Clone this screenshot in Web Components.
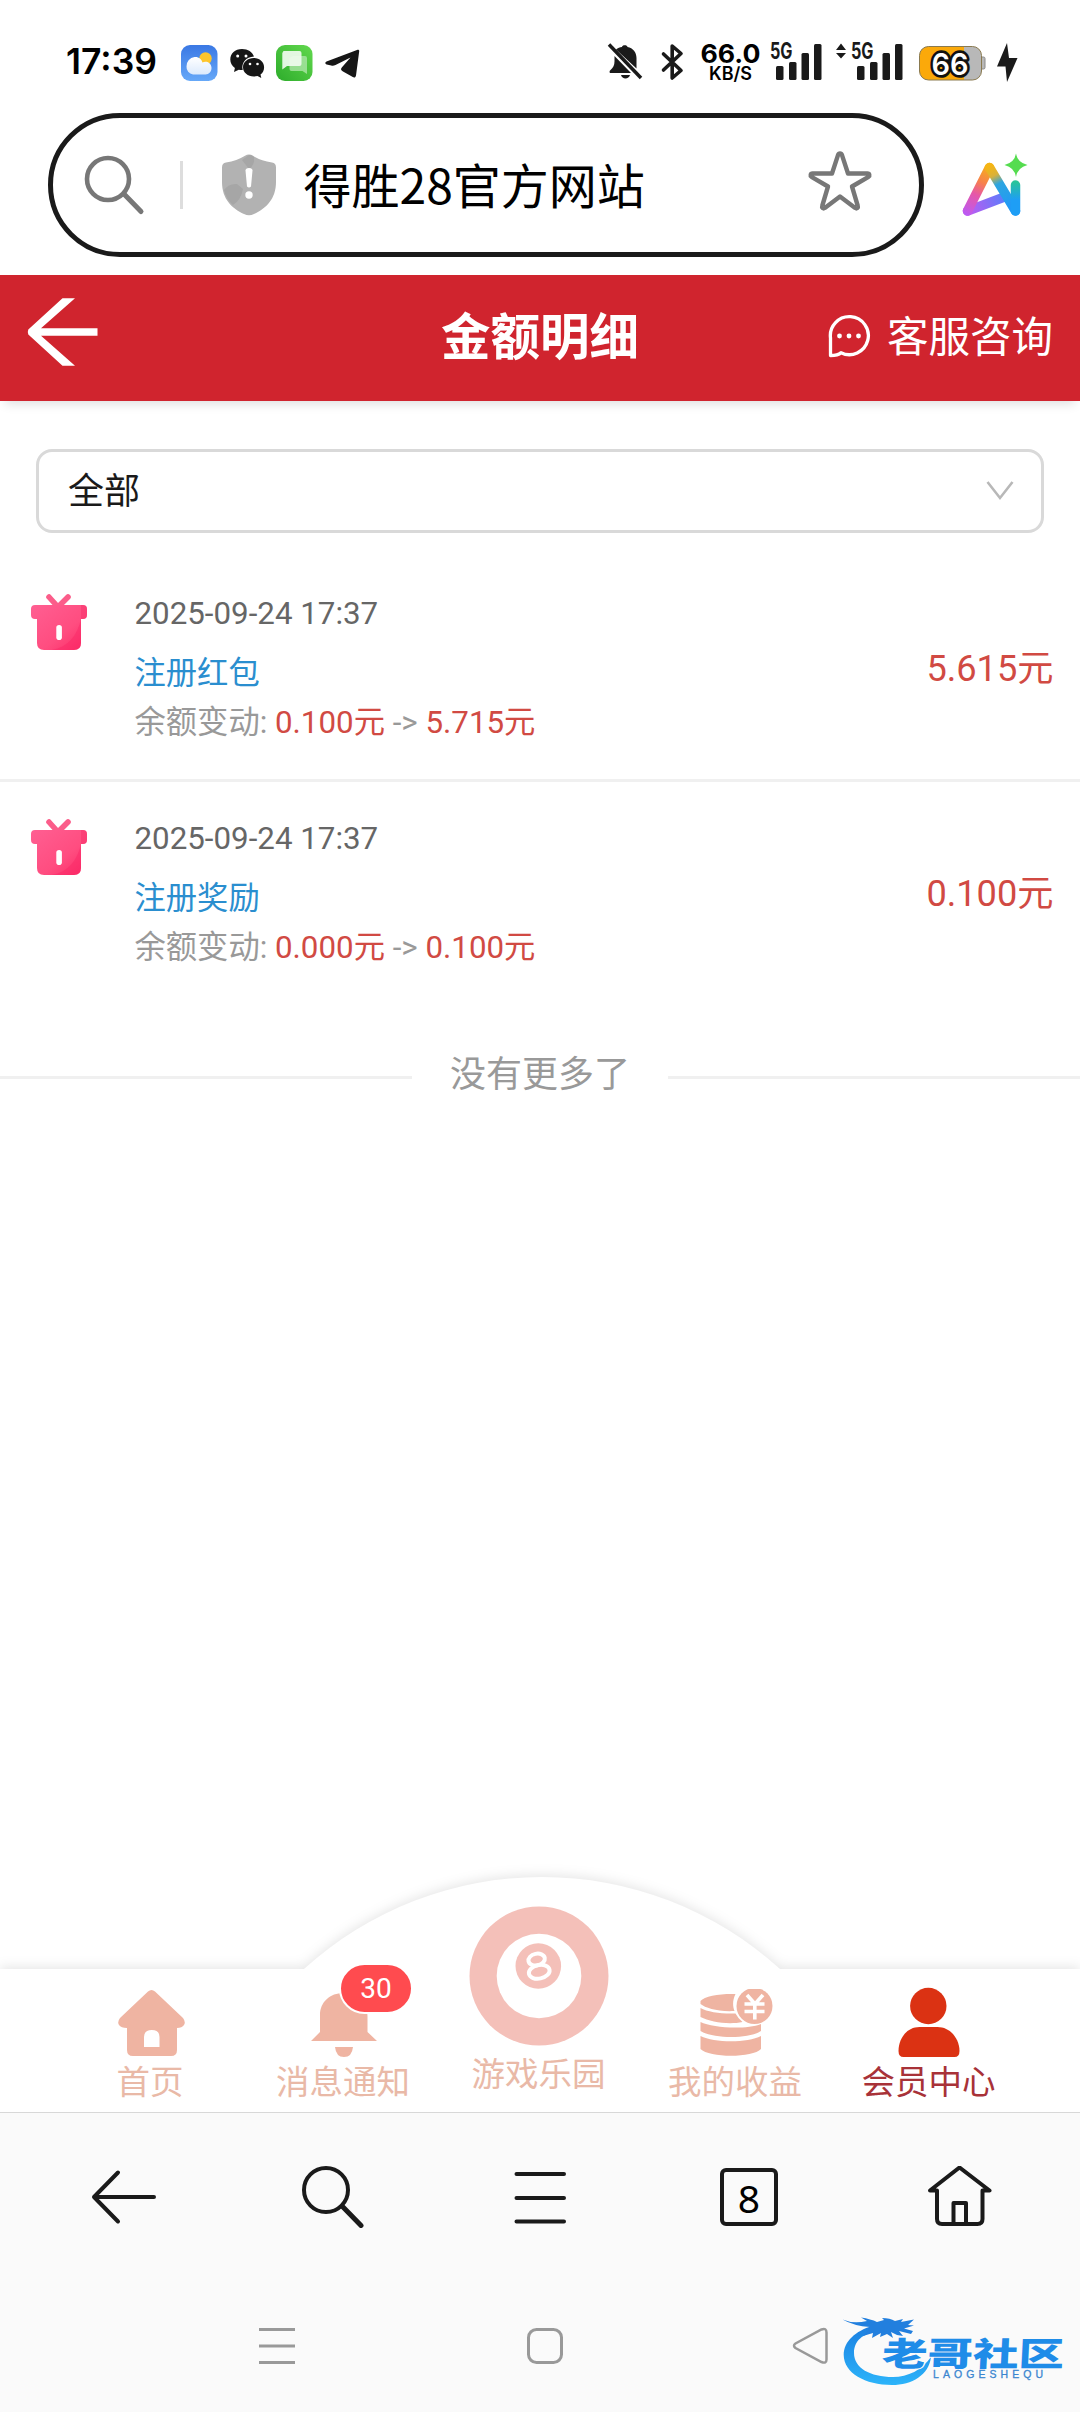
<!DOCTYPE html>
<html lang="zh-CN">
<head>
<meta charset="utf-8">
<title>金额明细</title>
<style>
html,body{margin:0;padding:0;background:#fff}
body{width:1080px;height:2412px;overflow:hidden;font-family:Roboto,"Noto Sans CJK SC",sans-serif}
</style>
</head>
<body>
<phone-screen>
  <status-bar></status-bar>
  <address-bar>得胜28官方网站</address-bar>
  <page-header>金额明细<span slot="service">客服咨询</span></page-header>
  <filter-select>全部</filter-select>
  <record-list>
    <record-item time="2025-09-24 17:37" from="0.100元" to="5.715元" amount="5.615元" divided>注册红包</record-item>
    <record-item time="2025-09-24 17:37" from="0.000元" to="0.100元" amount="0.100元">注册奖励</record-item>
  </record-list>
  <list-end>没有更多了</list-end>
  <tab-bar slot="bottom">
    <tab-item icon="house" style="width:193px">首页</tab-item>
    <tab-item icon="bell" badge="30" style="width:193px">消息通知</tab-item>
    <tab-item icon="ball" big style="width:198px">游戏乐园</tab-item>
    <tab-item icon="coins" style="width:195px">我的收益</tab-item>
    <tab-item icon="person" active style="width:192px">会员中心</tab-item>
  </tab-bar>
  <browser-bar slot="bottom">8</browser-bar>
  <system-nav slot="bottom"></system-nav>
</phone-screen>
<script>
const define = (name, html) => customElements.define(name, class extends HTMLElement {
  connectedCallback() {
    if (this.shadowRoot) return;
    const t = document.createElement('template');
    t.innerHTML = typeof html === 'function' ? html(this) : html;
    this.attachShadow({mode: 'open'}).append(t.content.cloneNode(true));
  }
});

define('phone-screen', `
<style>
:host{display:flex;flex-direction:column;width:1080px;height:2412px;background:#fff}
main{flex:1;min-height:0}
</style>
<main><slot></slot></main><slot name="bottom"></slot>`);

define('status-bar', `
<style>
:host{display:flex;height:96px;box-sizing:border-box;padding:43px 60px 0 66px;justify-content:space-between;align-items:flex-start;color:#000}
.g{display:flex}
svg{display:block;overflow:visible}
text{font-family:Inter,sans-serif}
.t{margin-right:24px}
.w{margin-right:12px}.c{margin-right:12px}.m{margin-right:12px}
</style>
<div class="g">
 <svg class="t" width="91" height="38"><text x="0" y="31" font-size="36" font-weight="600" textLength="91" lengthAdjust="spacingAndGlyphs">17:39</text></svg>
 <svg class="w" width="37" height="38" viewBox="0 0 37 38">
  <defs><linearGradient id="b" x2="0" y2="1"><stop stop-color="#3a78e4"/><stop offset="1" stop-color="#66a8f8"/></linearGradient><linearGradient id="cl" x2="0" y2="1"><stop stop-color="#fff"/><stop offset="1" stop-color="#dceafc"/></linearGradient></defs>
  <rect y="2" width="36.500" height="36" rx="9" fill="url(#b)"/><circle cx="24.500" cy="15.500" r="6.200" fill="#fdc52c"/>
  <path d="M12 31.500a7.500 7.500 0 0 1-6.500-8 9 9 0 0 1 8-9.500c4-.5 7 2 8 5.500 3-2 8.500-.5 9 5 .2 4-2.500 7-6 7z" fill="url(#cl)"/>
 </svg>
 <svg class="c" width="34" height="38" viewBox="0 0 34 38">
  <path d="M12 6C5 6 .3 10.500.3 16.500c0 3.600 1.700 6.500 4.600 8.500L4 29l4.800-2.300c1.200.3 2.600.4 3.900.3C11 20 16 14 24 13.600 22.500 9 18 6 12 6z" fill="#161616"/>
  <path d="M23.800 15c-6 0-10.800 4-10.800 9.200s4.800 9.200 10.800 9.200c1.300 0 2.500-.2 3.700-.5L31.300 35l-.8-3.400c2.300-1.700 3.600-4.400 3.600-7.400C34.100 19 29.500 15 23.800 15z" fill="#161616"/>
  <g fill="#fff"><circle cx="7.700" cy="13" r="1.500"/><circle cx="16" cy="13" r="1.500"/><circle cx="20" cy="21" r="1.300"/><circle cx="27.500" cy="21" r="1.300"/></g>
 </svg>
 <svg class="m" width="37" height="38" viewBox="0 0 37 38">
  <defs><linearGradient id="gg" x1="1" x2="0" y2="1"><stop stop-color="#62d84e"/><stop offset="1" stop-color="#2dac2b"/></linearGradient></defs>
  <rect y="2" width="36.500" height="36" rx="9" fill="url(#gg)"/>
  <path d="M17 13h12a2 2 0 0 1 2 2v16l-4.500-3H15.500a2 2 0 0 1-2-2V15z" fill="#a6e3a0" opacity=".85"/>
  <path d="M7.500 8h16a2 2 0 0 1 2 2v11a2 2 0 0 1-2 2H11l-4.700 3.500V10z" fill="#effbee" opacity=".93"/>
 </svg>
 <svg width="35" height="38" viewBox="0 0 35 38"><path d="M1.500 18.500 32 7c1.500-.5 2.300.1 2.200 1.200L31 32.500c-.3 1.800-1.600 2.600-3.200 1.600L18 28.500c-2.200-1.300-2.600-2.400-1-4.300L25.500 14.500 10.500 22c-1.600.8-2.700 1-4.300.6L1.700 21.500c-1.700-.5-1.900-2.400-.2-3z" fill="#161616"/></svg>
</div>
<svg width="413" height="42" viewBox="607 43 413 42" fill="#1a1a1a">
 <path d="M609 44.500 641 78" stroke="#1a1a1a" stroke-width="3.500"/>
 <path d="M616 49.500c2-1.600 3.700-2.300 6-2.500 0-2.500 5.500-2.500 5.500 0 5.500 1 9 5.500 9 11v10.500zM614.500 56 631 73H610c-.8-.8-.4-2 .3-2.700 3-2.800 4.200-5 4.200-9zM621 75h9c-1 4.600-8 4.600-9 0z"/>
 <path d="M663.500 54 681 70.500 672.200 78V46L681 53.500 663.500 70" fill="none" stroke="#1a1a1a" stroke-width="3.600" stroke-linejoin="round" stroke-linecap="round"/>
 <g fill="#000"><text x="700.500" y="63" font-size="26" font-weight="700" textLength="60" lengthAdjust="spacingAndGlyphs">66.0</text>
 <text x="709" y="79.800" font-size="18" font-weight="600" textLength="43" lengthAdjust="spacingAndGlyphs">KB/S</text></g>
 <text x="770" y="59.300" font-size="22.500" font-weight="700" textLength="22.500" lengthAdjust="spacingAndGlyphs">5G</text>
 <rect x="776" y="66" width="7.500" height="14" rx="1.500"/><rect x="789" y="62" width="7.500" height="18" rx="1.500"/><rect x="801.500" y="53" width="7.500" height="27" rx="1.500"/><rect x="814" y="44" width="7.500" height="36" rx="1.500"/>
 <path d="M836 50h10l-5-6.500zM836 53h10l-5 5.500z"/>
 <text x="851" y="59.300" font-size="22.500" font-weight="700" textLength="22.500" lengthAdjust="spacingAndGlyphs">5G</text>
 <rect x="857" y="66" width="7.500" height="14" rx="1.500"/><rect x="870" y="62" width="7.500" height="18" rx="1.500"/><rect x="882.500" y="53" width="7.500" height="27" rx="1.500"/><rect x="895" y="44" width="7.500" height="36" rx="1.500"/>
 <path d="M980 57h3.500a1.500 1.500 0 0 1 1.500 1.500v9a1.500 1.500 0 0 1-1.500 1.500H980z" fill="#b8b8b8" stroke="#8a8a8a"/>
 <rect x="919.500" y="46.500" width="62" height="33.500" rx="9" fill="#b8b8b8"/><path d="M964 46.500H928.500a9 9 0 0 0-9 9V71a9 9 0 0 0 9 9H964z" fill="#fba90a"/>
 <rect x="919.500" y="46.500" width="62" height="33.500" rx="9" fill="none" stroke="#8a7a50"/>
 <text x="931.500" y="74.500" font-size="30" font-weight="600" fill="#fff" stroke="#111" stroke-width="5.500" stroke-linejoin="round" paint-order="stroke" textLength="37" lengthAdjust="spacingAndGlyphs">66</text>
 <path d="M1007 43 997 66.500h8.500L1007 82l10.500-24H1009z"/>
</svg>`);

define('address-bar', `
<style>
:host{display:flex;height:179px;box-sizing:border-box;padding:17px 52px 0 48px;gap:38px;align-items:flex-start}
.pill{box-sizing:border-box;width:876px;height:144px;border:5px solid #1a1a1a;border-radius:72px;display:flex;align-items:center;padding:0 47px 0 31px}
.txt{flex:1;font:48px/70px "Noto Sans CJK SC",sans-serif;color:#000;margin:-4px 0 0 27px}
i{width:2.500px;height:48px;background:#ddd;margin:0 38px 0 36px}
svg{display:block;overflow:visible}
</style>
<div class="pill">
 <svg width="60" height="60" viewBox="84 155 60 60" fill="none" stroke="#777" stroke-width="4.600" stroke-linecap="round"><circle cx="108" cy="179" r="21"/><path d="m124 194 17 17.500" stroke-width="5"/></svg>
 <i></i>
 <svg width="56" height="62" viewBox="221 154 56 62"><path d="M249 154.500q2 0 4 1.300 8 5 19 6.700 4 .7 4 5V182c0 17-10 26.500-22 32q-5 2.500-10 0c-12-5.500-22-15-22-32v-14.500q0-4.300 4-5 11-1.700 19-6.700 2-1.300 4-1.300z" fill="#b2b2b2"/><path d="M249 155q3 0 5 2 1 8-5 12l-7-9zM224 190q5-7 13-6l6 5q-2 11-10 16-7-6-9-15z" fill="#a6a6a6"/><path d="M245.500 170.500q0-2.500 3.500-2.500t3.500 2.500l-1.500 16q-2 2-4 0z" fill="#fff"/><circle cx="249" cy="195" r="3.700" fill="#fff"/></svg>
 <span class="txt"><slot></slot></span>
 <svg width="62" height="60" viewBox="809 152 62 60" transform="translate(-1 -4)"><path d="M840 154.500c1 0 1.600.5 2 1.600l6 18.400h19.500c2 0 2.500 2.200 1 3.300L852 187.500l5.800 19.500c.6 1.800-1 3-2.600 2L840 197.500 824.800 209c-1.600 1-3.200-.2-2.600-2l5.800-19.500L811.500 177.800c-1.500-1.100-1-3.300 1-3.300H832l6-18.400c.4-1.100 1-1.600 2-1.600z" fill="none" stroke="#777" stroke-width="4.400" stroke-linejoin="round"/></svg>
</div>
<svg style="margin-top:40px" width="66" height="64" viewBox="962 153 66 64">
 <defs><linearGradient id="a1" gradientUnits="userSpaceOnUse" x1="990" y1="165" x2="966" y2="214"><stop stop-color="#f5b514"/><stop offset=".35" stop-color="#f7814c"/><stop offset=".6" stop-color="#e657a8"/><stop offset="1" stop-color="#bc5af2"/></linearGradient>
 <linearGradient id="a2" gradientUnits="userSpaceOnUse" x1="966" y1="212" x2="1004" y2="196"><stop stop-color="#c25af0"/><stop offset="1" stop-color="#5c7cfb"/></linearGradient>
 <linearGradient id="a3" gradientUnits="userSpaceOnUse" x1="990" y1="166" x2="1014" y2="212"><stop stop-color="#f5b514"/><stop offset=".2" stop-color="#d9b13a"/><stop offset=".38" stop-color="#2da5e0"/><stop offset="1" stop-color="#1e96fb"/></linearGradient>
 <linearGradient id="a4" gradientUnits="userSpaceOnUse" x1="1016" y1="182" x2="1016" y2="212"><stop stop-color="#28c49a"/><stop offset=".6" stop-color="#1e9ef5"/></linearGradient></defs>
 <g fill="none" stroke-width="9.500" stroke-linecap="round"><path d="M967.500 211 1003 197.500" stroke="url(#a2)"/><path d="M989.500 167.500 967.500 211" stroke="url(#a1)"/><path d="M989.500 167.500 1015.500 211" stroke="url(#a3)"/><path d="M1015.500 185V211" stroke="url(#a4)"/></g>
 <path d="M1016 153.500q1.500 9 11.500 11.500-10 2.500-11.500 12-1.500-9.500-11.500-12 10-2.500 11.500-11.500z" fill="#55dc4f"/>
</svg>`);

define('page-header', `
<style>
:host{display:grid;grid-template-columns:1fr auto 1fr;height:126px;box-sizing:border-box;padding:0 27px;align-items:center;background:#d0242e;color:#fff;box-shadow:0 8px 10px -5px rgba(0,0,0,.13);font-family:"Noto Sans CJK SC",sans-serif}
h1{margin:-9px 0 0;font-size:49.500px;line-height:70px;font-weight:700}
.s{justify-self:end;display:flex;align-items:center;gap:16px;font-size:41.500px;line-height:60px;margin-top:-8px}
svg{display:block}
.s svg{margin-top:4px}
</style>
<svg width="72" height="70" viewBox="27 297 72 70" style="margin-top:-12px"><path d="M62.500 298.300H75L41 328.200H97.500V335.800H41L75 365.700H62.500L28.300 334.500Q27.300 332 28.300 329.500z" fill="#fff"/></svg>
<h1><slot></slot></h1>
<div class="s"><svg width="44" height="44" viewBox="828 313 44 44"><path d="M831.500 354.500V337a19 19 0 1 1 10.500 14.700q-3 2.800-10.500 2.800z" fill="none" stroke="#fff" stroke-width="3.300" stroke-linejoin="round"/><g fill="#fff"><circle cx="840.500" cy="335" r="2.400"/><circle cx="850" cy="335" r="2.400"/><circle cx="859.500" cy="335" r="2.400"/></g></svg><slot name="service"></slot></div>`);

define('filter-select', `
<style>
:host{display:flex;margin:48px 36px 24px;height:84px;box-sizing:border-box;border:3px solid #d9d9d9;border-radius:16px;align-items:center;justify-content:space-between;padding:0 27px 0 29px;font:36px/52px "Noto Sans CJK SC",sans-serif;color:#1a1a1a}
span{margin-top:-7px}
</style>
<span><slot></slot></span>
<svg width="28" height="20"><path d="m1.500 1 12.500 16L26.500 1" fill="none" stroke="#b8b8b8" stroke-width="2.600"/></svg>`);

define('record-list', `<style>:host{display:block}</style><slot></slot>`);

define('record-item', el => `
<style>
:host{display:flex;height:222px;box-sizing:border-box;padding:26px 26.500px 0 30px;font-size:31.300px;color:#999}
:host([divided]){height:225px;border-bottom:3px solid #f0f0f0}
svg{display:block;margin:10px 46.500px 0 0}
.info{flex:1}
.d{line-height:61px;color:#666}.k{line-height:60px;color:#2a8ecf}.c{line-height:38px}
b{font-weight:400;color:#d14a43}
.a{align-self:flex-start;line-height:172px;font-size:36.200px;color:#d14a43}
</style>
<svg width="58" height="58" viewBox="30 593 58 58">
 <defs><linearGradient id="g" x2="1" y2="1"><stop stop-color="#ff5f92"/><stop offset=".6" stop-color="#ff4d80"/><stop offset="1" stop-color="#fb2965"/></linearGradient></defs>
 <path d="m49 597 9 10 10-10" fill="none" stroke="#fb5d8a" stroke-width="5.600" stroke-linecap="round" stroke-linejoin="round"/>
 <path d="M35 605H83q4 0 4 4v6q0 4-4 4H81v24q0 7-7 7H44q-7 0-7-7V619H35q-4 0-4-4v-6q0-4 4-4z" fill="url(#g)"/>
 <path d="M81 619v24q0 7-7 7H52c16-3 25-14 29-31z" fill="#fb2463" opacity=".4"/><path d="M81 605h2q4 0 4 4v6q0 4-4 4h-2z" fill="#f42460" opacity=".35"/>
 <rect x="56.300" y="625" width="5.600" height="15" rx="2.800" fill="#fff"/>
</svg>
<div class="info"><div class="d">${el.getAttribute('time')}</div><div class="k"><slot></slot></div><div class="c">余额变动: <b>${el.getAttribute('from')}</b> -&gt; <b>${el.getAttribute('to')}</b></div></div>
<div class="a">${el.getAttribute('amount')}</div>`);

define('list-end', `
<style>
:host{display:flex;align-items:center;gap:38px;height:54px;margin-top:44px;font-size:36px;line-height:54px;color:#999}
i{flex:1;height:3px;background:#f0f0f0;margin-top:4px}
</style><i></i><slot></slot><i></i>`);

define('tab-bar', `
<style>
:host{display:flex;position:relative;height:143px;padding:0 54px;box-sizing:border-box;background:#fff}
.clip{position:absolute;left:0;right:0;top:-119px;height:262px;overflow:hidden}
svg{display:block;filter:drop-shadow(0 -2px 6px rgba(0,0,0,.1))}
</style>
<div class="clip"><svg width="1080" height="262" viewBox="0 1850 1080 262"><path d="M-30 1969H304A354 354 0 0 1 780 1969H1110V2140H-30z" fill="#fff"/></svg></div>
<slot></slot>`);

const icons = {
 house: `<svg width="68" height="68" viewBox="117 1989 68 68"><path fill-rule="evenodd" d="M148 1991.500q3.500-3 7 0L183 2018q3 4 1 7-2 3-7 3v22q0 6-6 6H133q-6 0-6-6v-22q-6 0-8-3-2-3 1-7zM144 2047h15.500v-10q0-7-7.700-7t-7.800 7z" fill="#efb4a2"/></svg>`,
 bell: `<svg width="68" height="68" viewBox="311 1989 68 68"><path d="M344.500 1993c14 0 24 9 24 23v16l9.500 9H312l9-9v-17c0-13 10-22 23.500-22zM336 2047h18q-1 10-9 10t-9-10z" fill="#efb4a2"/></svg>`,
 ball: `<svg width="140" height="142" viewBox="470.500 1905 140 142"><circle cx="540.500" cy="1976" r="69.500" fill="#f4c0b9"/><circle cx="540.500" cy="1976" r="42.300" fill="#fff"/><circle cx="539.800" cy="1966" r="22.800" fill="#f4c0b9"/><g fill="none" stroke="#fff" stroke-width="4" transform="rotate(-12 539 1966)"><ellipse cx="539.500" cy="1959.500" rx="8.300" ry="5.800"/><ellipse cx="539.500" cy="1972" rx="10.500" ry="6.800"/></g></svg>`,
 coins: `<svg width="74" height="68" viewBox="699 1989 74 68"><g fill="#efb4a2"><path d="M700.500 2001c4-5 20-7.500 35-7-3 6-3 12-1 17-16 1-29-3-34-7zM700.500 2008c7 4 21 6 35 5.500q2 4 7 8.500c-14 3-32 0-42-5zM700.500 2022c12 6 45 8 60.500 2v7c-12 8-47 8-60.500 0zM700.500 2036c14 7 47 7 60.500 0v13c-8 9-52 9-60.500 0z"/><circle cx="754.500" cy="2006" r="18"/></g><path d="m747 1995 8 9 8-9M744.500 2004h20M744.500 2011.500h20M754.800 2004v15.500" fill="none" stroke="#fff" stroke-width="3.600"/></svg>`,
 person: `<svg width="64" height="70" viewBox="897.500 1987 64 70"><circle cx="928.800" cy="2006" r="18.200" fill="#db3213"/><path d="M920 2027h18c13 0 22 12 22 24q0 6-5 6H904q-5 0-5-6c0-12 8-24 21-24z" fill="#db3213"/></svg>`
};
define('tab-item', el => `
<style>
:host{display:flex;position:relative;flex-direction:column;align-items:center;padding-top:20px;box-sizing:border-box;font:33.500px/46px "Noto Sans CJK SC",sans-serif;color:#e9b9a7}
:host([big]){padding-top:0}
:host([big]) svg{margin-top:-64px}
:host([big]) span{margin-top:2px}
:host([active]){color:#a83238}
:host([active]) svg{margin-top:-2px}
svg,span{position:relative;display:block;flex:none}
span{margin-left:-1px}
b{position:absolute;left:92px;top:-6px;width:70px;height:47px;border:2px solid #fff;border-radius:26px;background:#ff4b4f;color:#fff;font:400 28px/47px Roboto,sans-serif;text-align:center}
</style>
${icons[el.getAttribute('icon')]}<span><slot></slot></span>${el.hasAttribute('badge') ? `<b>${el.getAttribute('badge')}</b>` : ''}`);

define('browser-bar', `
<style>
:host{display:flex;height:170px;box-sizing:border-box;border-top:1px solid #d8d8d8;background:#fafafa;padding:0 0 2px 90px;align-items:center}
svg,.n{display:block;flex:none}
svg{fill:none;stroke:#1a1a1a;stroke-width:4;stroke-linecap:round;stroke-linejoin:round}
.n{box-sizing:border-box;width:58px;height:58px;border:4px solid #1a1a1a;border-radius:6px;font:39px/51px "Noto Sans",sans-serif;color:#000;text-align:center;margin:0 149px 0 152px}
</style>
<svg width="68" height="62" viewBox="90 2166 68 62"><path d="M118 2172.500 94 2197l24 24.500M94 2197h60"/></svg>
<svg style="margin:0 147px 0 143px" width="64" height="62" viewBox="301 2166 64 62"><circle cx="326" cy="2190" r="22"/><path d="m342.500 2206.500 18.500 19" stroke-width="5"/></svg>
<svg width="56" height="62" viewBox="512 2166 56 62"><path d="M516.500 2174h47.500M516.500 2198h47.500M516.500 2221.500h47.500"/></svg>
<div class="n"><slot></slot></div>
<svg width="66" height="62" viewBox="927 2166 66 62"><path d="M937 2190.500h-7l29.500-23 30 23h-7V2219q0 5-5 5H942q-5 0-5-5zM953.500 2223v-20h12.500v20"/></svg>`);

define('system-nav', `
<style>
:host{display:flex;height:130px;background:#fafafa;padding-left:259px;box-sizing:border-box;align-items:flex-start}
svg{display:block;flex:none;fill:none;stroke:#999;stroke-width:3;overflow:visible}
.m{margin:46px 232px 0 0}.q{margin:46px 230px 0 0}.t{margin:46px 13px 0 0}
.w{margin-top:26px;stroke:none}
</style>
<svg class="m" width="36" height="36"><path d="M0 1.500h36M0 18h36M0 34.500h36"/></svg>
<svg class="q" width="36" height="36"><rect x="1.500" y="1.500" width="33" height="33" rx="8"/></svg>
<svg class="t" width="35" height="36" viewBox="793.500 2328 35 36"><path d="M796 2343.500q-3 2 0 4.500l26 14q5 2 5-2.500v-27q0-5-5-3z" style="stroke-width:2.500"/></svg>
<svg class="w" width="222" height="82" viewBox="841 2308 222 82">
 <defs><linearGradient id="w" gradientUnits="userSpaceOnUse" x1="0" y1="2315" x2="0" y2="2385"><stop stop-color="#2472d4"/><stop offset=".3" stop-color="#1e88e5"/><stop offset="1" stop-color="#2cb4fa"/></linearGradient></defs>
 <path d="M872 2326C856 2331 843.700 2341 843.700 2355 844 2373 865 2385 892 2385 912 2385 929 2375 931 2357 922 2370 908 2377 893 2377 870 2377 854 2368 854 2353 854 2341 863 2333 877 2332z" fill="url(#w)"/>
 <path d="M842.500 2319.500Q853 2324 867 2321L861 2317.500Q871 2319 877 2322L884 2320 882 2318Q890 2318 895 2321L903 2319 901 2322 914 2319.500 908 2325 914 2325.500 904 2328.500 913 2331 911 2334 899 2331 903 2336 897 2335 891 2332 893 2338 887 2334 880 2337 881 2333 872 2338 873 2333 863 2336Q868 2331 870 2327 854 2326 842.500 2319.500z" fill="#227fde"/>
 <text transform="translate(881.500 2365.800) skewX(-3)" font-family="Noto Sans CJK SC" font-weight="900" font-size="33" fill="#1f8ce8" stroke="#fafafa" stroke-width="2" paint-order="stroke" textLength="182" lengthAdjust="spacingAndGlyphs">老哥社区</text>
 <text x="933" y="2378.300" font-family="Liberation Sans" font-size="10.500" fill="#3a86d0" stroke="#3a86d0" stroke-width=".3" textLength="110" lengthAdjust="spacing">LAOGESHEQU</text>
</svg>`);
</script>
</body>
</html>
